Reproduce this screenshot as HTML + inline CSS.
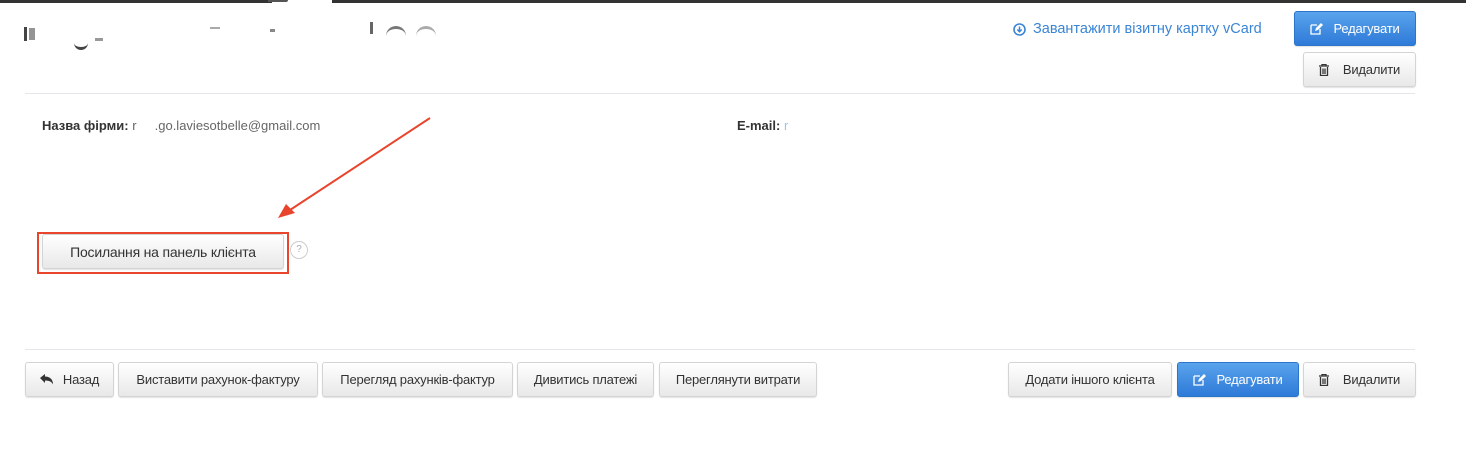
<!DOCTYPE html>
<html><head><meta charset="utf-8"><style>
body{margin:0;width:1466px;height:458px;background:#fff;position:relative;overflow:hidden;font-family:"Liberation Sans","DejaVu Sans",sans-serif;}
.a{position:absolute;}
.btn{position:absolute;box-sizing:border-box;height:35px;border-radius:3px;background:linear-gradient(#fff,#e8e8e8);border:1px solid #d4d4d4;box-shadow:0 1px 1px rgba(0,0,0,.12);font-size:13px;color:#333;display:flex;align-items:center;justify-content:center;white-space:nowrap;letter-spacing:-.2px}
.blue{background:linear-gradient(#5aa3ec,#2e7ad8);border-color:#2c74cc;color:#fff}
.line{position:absolute;left:25px;width:1390px;height:1px;background:#e4e6ea}
svg{flex:none}
</style></head><body>
<div class="a" style="left:0;top:0;width:272px;height:3px;background:#333"></div>
<div class="a" style="left:332px;top:0;width:1134px;height:3px;background:#333"></div>
<div class="a" style="left:268px;top:0;width:20px;height:2px;background:#555;border-radius:0 0 10px 0"></div>
<!-- blurred title -->
<div class="a" style="left:24px;top:27px;width:3px;height:14px;background:#444"></div>
<div class="a" style="left:29px;top:28px;width:6px;height:12px;background:#666;opacity:.7"></div>
<div class="a" style="left:74px;top:37px;width:14px;height:10px;border-bottom:3px solid #444;border-radius:0 0 8px 8px"></div>
<div class="a" style="left:95px;top:38px;width:8px;height:3px;background:#999"></div>
<div class="a" style="left:210px;top:27px;width:10px;height:2px;background:#aaa"></div>
<div class="a" style="left:270px;top:29px;width:5px;height:3px;background:#888"></div>
<div class="a" style="left:370px;top:22px;width:3px;height:12px;background:#666"></div>
<div class="a" style="left:386px;top:26px;width:20px;height:8px;border-top:3px solid #777;border-radius:10px 10px 0 0"></div>
<div class="a" style="left:416px;top:26px;width:20px;height:8px;border-top:3px solid #aaa;border-radius:10px 10px 0 0"></div>

<div class="a" style="left:1013px;top:21px;font-size:14.5px;color:#3a85d4;display:flex;align-items:center;gap:7px"><svg width="13" height="13" viewBox="0 0 13 13"><circle cx="6.5" cy="6.5" r="5.5" fill="none" stroke="#3a85d4" stroke-width="1.6"/><path d="M6.5 3.5v5M4.3 6.5l2.2 2.3 2.2-2.3" fill="none" stroke="#3a85d4" stroke-width="1.5"/></svg>Завантажити візитну картку vCard</div>

<div class="btn blue" style="left:1294px;top:11px;width:122px;height:35px"><svg width="13" height="12" viewBox="0 0 13 12" style="margin-right:10px"><path d="M1 2h6M1 2v9h9V6" fill="none" stroke="#fff" stroke-width="1.3"/><path d="M5 8l1-3 5-5 2 2-5 5z" fill="#fff"/></svg>Редагувати</div>
<div class="btn" style="left:1303px;top:52px;width:113px"><svg width="10" height="12" viewBox="0 0 10 12" style="margin-right:14px"><path d="M0 2h10M3 2V0.5h4V2M1.5 3v8.5h7V3M4 4.5v5.5M6 4.5v5.5" fill="none" stroke="#333" stroke-width="1.3"/></svg>Видалити</div>

<div class="line" style="top:93px"></div>

<div class="a" style="left:42px;top:118px;font-size:13px;color:#333"><b>Назва фірми:</b> <span style="color:#666">r&nbsp;&nbsp;&nbsp;&nbsp;&nbsp;.go.laviesotbelle@gmail.com</span></div>
<div class="a" style="left:737px;top:118px;font-size:13px;color:#333"><b>E-mail:</b> <span style="color:#9cc4ec">r</span></div>

<svg class="a" style="left:0;top:0" width="1466" height="458"><line x1="430" y1="118" x2="290" y2="210" stroke="#e8452c" stroke-width="2"/><path d="M278 218l8-14 9 9z" fill="#e8452c"/></svg>

<div class="a" style="left:37px;top:232px;width:248px;height:38px;border:2px solid #e8452c"></div>
<div class="btn" style="left:42px;top:234px;width:242px;font-size:14px">Посилання на панель клієнта</div>
<div class="a" style="left:290px;top:241px;width:16px;height:16px;border:1px solid #ccc;border-radius:50%;font-size:10px;color:#aaa;text-align:center;line-height:16px">?</div>

<div class="line" style="top:349px"></div>

<div class="btn" style="left:25px;top:362px;width:89px"><svg width="13" height="11" viewBox="0 0 13 11" style="margin-right:10px"><path d="M0 4l5-4v2.5c5 0 8 3 8 8-1.5-3-4-4-8-4V9z" fill="#333"/></svg>Назад</div>
<div class="btn" style="left:118px;top:362px;width:200px">Виставити рахунок-фактуру</div>
<div class="btn" style="left:322px;top:362px;width:191px">Перегляд рахунків-фактур</div>
<div class="btn" style="left:517px;top:362px;width:137px">Дивитись платежі</div>
<div class="btn" style="left:659px;top:362px;width:158px">Переглянути витрати</div>
<div class="btn" style="left:1008px;top:362px;width:164px">Додати іншого клієнта</div>
<div class="btn blue" style="left:1177px;top:362px;width:122px"><svg width="13" height="12" viewBox="0 0 13 12" style="margin-right:10px"><path d="M1 2h6M1 2v9h9V6" fill="none" stroke="#fff" stroke-width="1.3"/><path d="M5 8l1-3 5-5 2 2-5 5z" fill="#fff"/></svg>Редагувати</div>
<div class="btn" style="left:1303px;top:362px;width:113px"><svg width="10" height="12" viewBox="0 0 10 12" style="margin-right:14px"><path d="M0 2h10M3 2V0.5h4V2M1.5 3v8.5h7V3M4 4.5v5.5M6 4.5v5.5" fill="none" stroke="#333" stroke-width="1.3"/></svg>Видалити</div>
</body></html>
